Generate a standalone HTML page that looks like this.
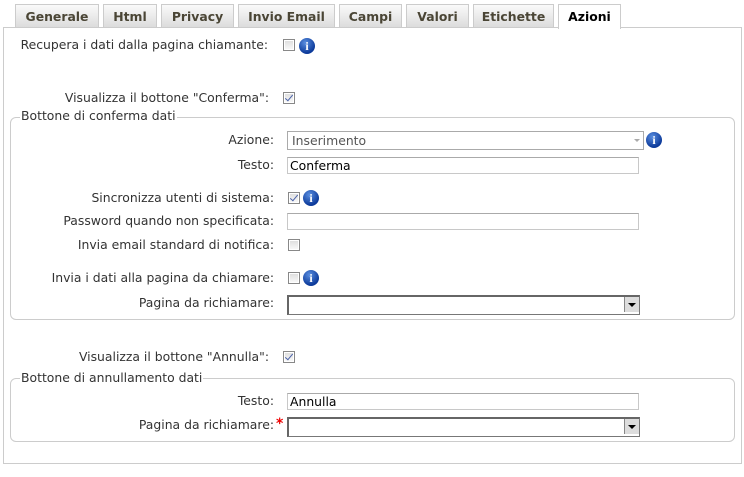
<!DOCTYPE html>
<html><head><meta charset="utf-8"><style>
body{margin:0;width:744px;height:477px;background:#fff;font-family:"DejaVu Sans","Liberation Sans",sans-serif;font-size:12.4px;color:#333;position:relative;overflow:hidden}
.a{position:absolute}
.tab{position:absolute;top:4px;height:22px;border:1px solid #ccc;border-bottom:none;background:linear-gradient(#fafafa,#dcdcdc);font-weight:bold;color:#4a4535;text-align:center;line-height:23px;font-size:12.4px}
.tab.on{background:#fff;color:#000;height:24px;z-index:2}
.panel{position:absolute;left:3px;top:27px;width:737px;height:435px;border:1px solid #ccc}
.l{position:absolute;white-space:nowrap;text-align:right;line-height:14px}
.cb{position:absolute;width:10px;height:10px;border:1px solid #888;background:linear-gradient(#ddd,#fafafa);box-shadow:inset 0 0 0 1px #fff}
.ck::after{content:"";position:absolute;left:3px;top:0px;width:3px;height:7px;border:solid #4a62a8;border-width:0 1.5px 1.5px 0;transform:rotate(40deg)}
.inf{position:absolute;width:16px;height:16px;border-radius:50%;background:radial-gradient(circle at 40% 30%,#5a8ee0,#0c3a9a 70%);color:#fff;font:bold 12px "Liberation Serif",serif;text-align:center;line-height:16px}
.in{position:absolute;height:15px;border:1px solid #c8c8c8;border-top-color:#aaa;background:#fff;color:#000;line-height:16px;padding-left:2px}
.sel{position:absolute;height:17px;border:1px solid #777;border-top:2px solid #666;border-left:2px solid #666;background:#fff}
.sel b{position:absolute;right:0;top:0;width:14px;height:15px;background:#ddd;border-left:1px solid #888}
.sel b::after{content:"";position:absolute;left:3px;top:6px;border:4px solid transparent;border-top:4px solid #000;border-bottom:none}
.fs{position:absolute;border:1px solid #ccc;border-radius:6px}
.lg{position:absolute;background:#fff;padding:0 1px;line-height:14px}
</style></head><body>
<div class="tab" style="left:15px;width:82px">Generale</div>
<div class="tab" style="left:103px;width:52px">Html</div>
<div class="tab" style="left:161px;width:71px">Privacy</div>
<div class="tab" style="left:238px;width:95px">Invio Email</div>
<div class="tab" style="left:339px;width:61px">Campi</div>
<div class="tab" style="left:406px;width:61px">Valori</div>
<div class="tab" style="left:473px;width:79px">Etichette</div>
<div class="tab on" style="left:558px;width:61px">Azioni</div>
<div class="panel"></div>

<div class="l" style="right:476px;top:38px">Recupera i dati dalla pagina chiamante:</div>
<div class="cb" style="left:283px;top:39px"></div>
<div class="inf" style="left:299px;top:38px">i</div>

<div class="l" style="right:475px;top:91px">Visualizza il bottone "Conferma":</div>
<div class="cb ck" style="left:283px;top:92px"></div>

<div class="fs" style="left:10px;top:117px;width:723px;height:201px"></div>
<div class="lg" style="left:20px;top:109px">Bottone di conferma dati</div>

<div class="l" style="right:470px;top:133px">Azione:</div>
<div class="a" style="left:287px;top:131px;width:351px;height:17px;border:1px solid #aaa;background:#fff;color:#555;line-height:18px;padding-left:4px">Inserimento<span style="position:absolute;right:3px;top:7px;border:3px solid transparent;border-top:3px solid #aaa"></span></div>
<div class="inf" style="left:646px;top:132px">i</div>

<div class="l" style="right:470px;top:158px">Testo:</div>
<div class="in" style="left:287px;top:157px;width:348px">Conferma</div>

<div class="l" style="right:470px;top:191px">Sincronizza utenti di sistema:</div>
<div class="cb ck" style="left:288px;top:192px"></div>
<div class="inf" style="left:303px;top:190px">i</div>

<div class="l" style="right:470px;top:214px">Password quando non specificata:</div>
<div class="in" style="left:287px;top:213px;width:348px"></div>

<div class="l" style="right:470px;top:238px">Invia email standard di notifica:</div>
<div class="cb" style="left:288px;top:239px"></div>

<div class="l" style="right:470px;top:271px">Invia i dati alla pagina da chiamare:</div>
<div class="cb" style="left:288px;top:272px"></div>
<div class="inf" style="left:303px;top:270px">i</div>

<div class="l" style="right:470px;top:296px">Pagina da richiamare:</div>
<div class="sel" style="left:287px;top:295px;width:350px"><b></b></div>

<div class="l" style="right:475px;top:350px">Visualizza il bottone "Annulla":</div>
<div class="cb ck" style="left:283px;top:351px"></div>

<div class="fs" style="left:10px;top:378px;width:723px;height:62px"></div>
<div class="lg" style="left:20px;top:371px">Bottone di annullamento dati</div>

<div class="l" style="right:470px;top:394px">Testo:</div>
<div class="in" style="left:287px;top:393px;width:348px">Annulla</div>

<div class="l" style="right:470px;top:418px">Pagina da richiamare:</div>
<div class="a" style="left:276px;top:416px;color:#e00;font-weight:bold;font-size:14px">*</div>
<div class="sel" style="left:287px;top:417px;width:350px"><b></b></div>
</body></html>
